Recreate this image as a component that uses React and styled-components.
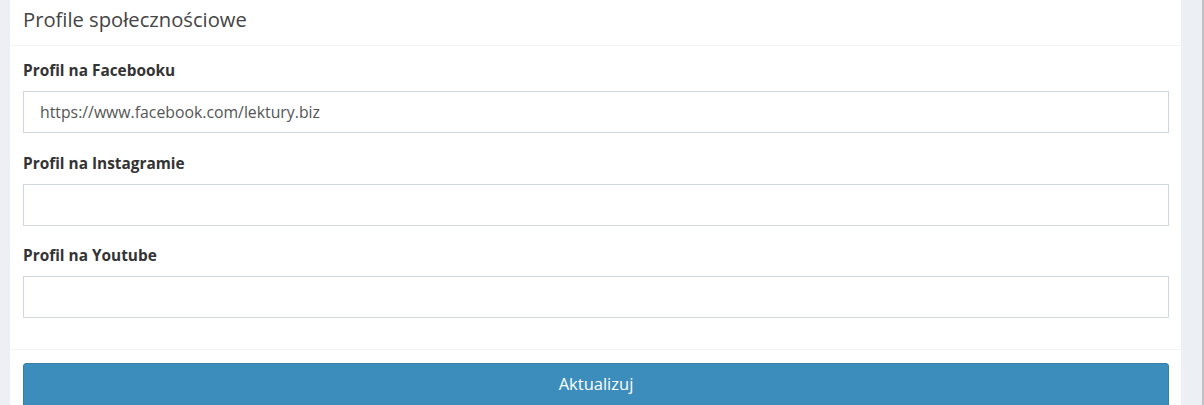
import styled, { createGlobalStyle } from "styled-components";

const GlobalStyle = createGlobalStyle`
  html, body {
    margin: 0;
    padding: 0;
    overflow: hidden;
    background: #ecf0f5;
    font-family: "Open Sans", "Liberation Sans", sans-serif;
  }
`;

const Page = styled.div`
  display: flex;
  height: 405px;
  padding-left: 10px;
  background: #ecf0f5;
  overflow: hidden;
`;

const Card = styled.section`
  flex: 1;
  background: #ffffff;
  display: flex;
  flex-direction: column;

  & > * {
    flex-shrink: 0;
  }
`;

const Gutter = styled.div`
  width: 21px;
`;

const ScrollEdge = styled.div`
  width: 2px;
  background: #c1c1c1;
`;

const CardHeader = styled.header`
  height: 46px;
  padding: 0 13px 8px;
  border-bottom: 1px solid #f4f4f4;
  display: flex;
  align-items: center;
  box-sizing: border-box;
`;

const Title = styled.h3`
  margin: 0;
  font-size: 20.2px;
  font-weight: 400;
  color: #444;
`;

const CardBody = styled.div`
  padding: 13px 12px 12px 13px;
  border-bottom: 1px solid #f4f4f4;
`;

const FormGroup = styled.div`
  margin-bottom: 18.5px;
`;

const Label = styled.label`
  display: block;
  line-height: 24px;
  margin-bottom: 8px;
  font-size: 15.4px;
  font-weight: 700;
  color: #333;
`;

const Input = styled.input`
  display: block;
  width: 100%;
  height: 42px;
  box-sizing: border-box;
  padding: 0 16px;
  border: 1px solid #d2d6de;
  border-radius: 0;
  font-family: inherit;
  font-size: 15.8px;
  color: #555;
  outline: none;
`;

const CardFooter = styled.div`
  padding: 13px 12px 0 13px;
`;

const PrimaryButton = styled.button`
  display: block;
  width: 100%;
  height: 45px;
  padding: 0 0 3px;
  background: #3c8dbc;
  border: 1px solid #367fa9;
  border-radius: 3px;
  color: #fff;
  font-family: inherit;
  font-size: 16.5px;
`;

const fields = [
  { label: "Profil na Facebooku", value: "https://www.facebook.com/lektury.biz" },
  { label: "Profil na Instagramie", value: "" },
  { label: "Profil na Youtube", value: "" },
];

export default function App() {
  return (
    <>
      <GlobalStyle />
      <Page>
        <Card>
          <CardHeader>
            <Title>Profile społecznościowe</Title>
          </CardHeader>
          <CardBody>
            {fields.map((f) => (
              <FormGroup key={f.label}>
                <Label>{f.label}</Label>
                <Input type="text" defaultValue={f.value} />
              </FormGroup>
            ))}
          </CardBody>
          <CardFooter>
            <PrimaryButton>Aktualizuj</PrimaryButton>
          </CardFooter>
        </Card>
        <Gutter />
        <ScrollEdge />
      </Page>
    </>
  );
}
